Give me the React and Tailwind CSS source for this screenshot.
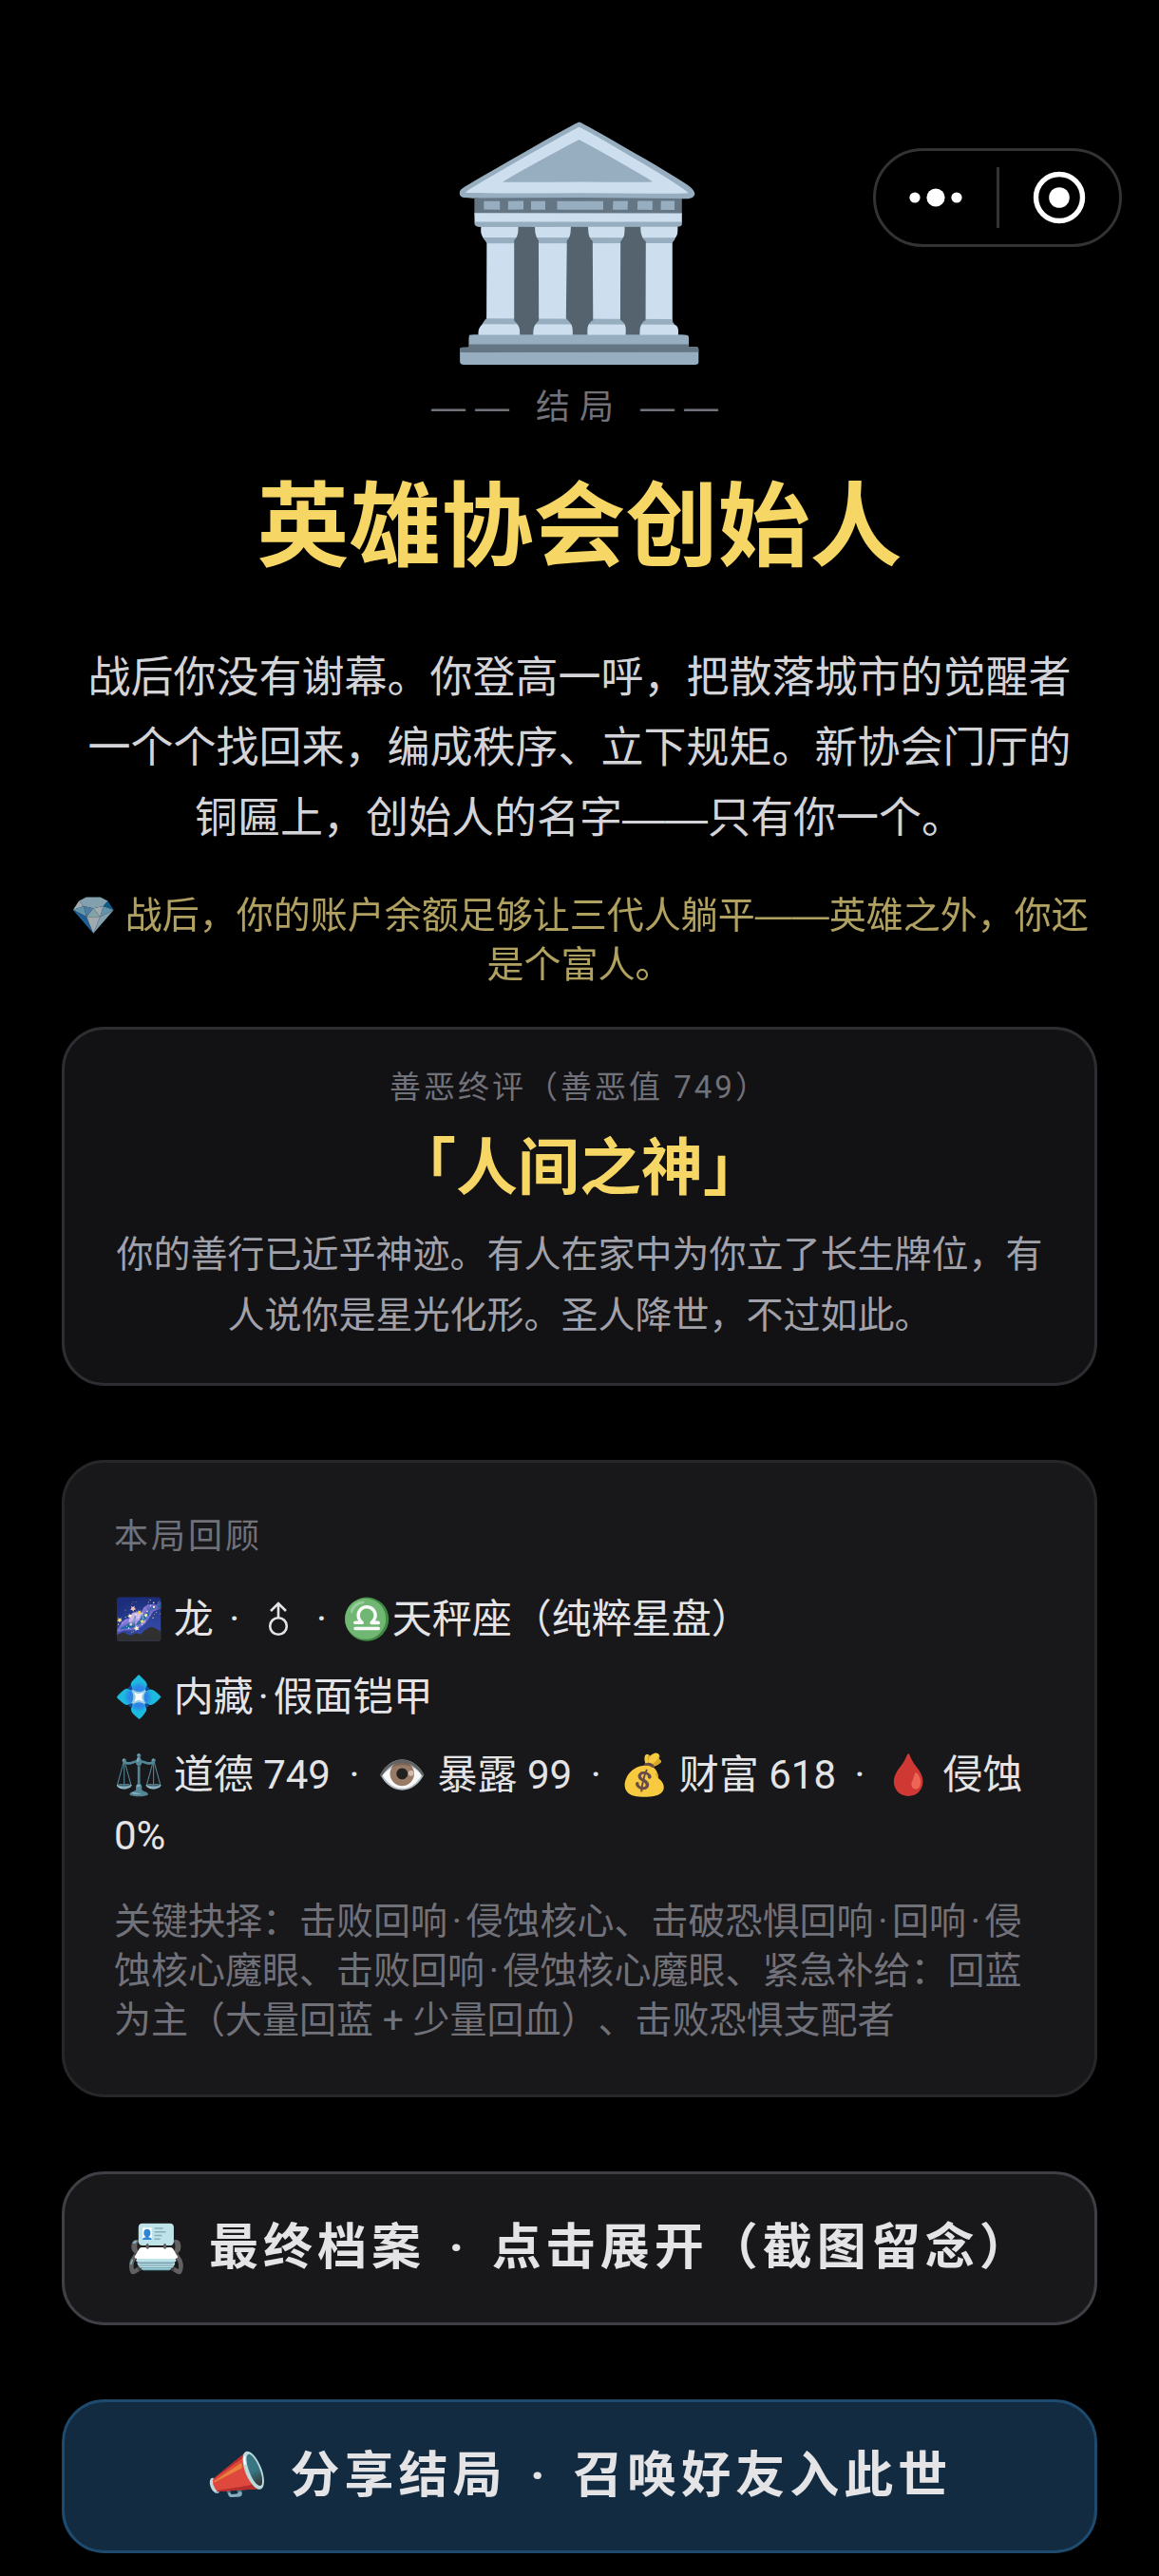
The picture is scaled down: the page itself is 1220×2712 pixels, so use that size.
import React from 'react';
import clsx from 'clsx';

const STATS = [
  { icon: '⚖️', label: '道德', value: '749' },
  { icon: '👁️', label: '暴露', value: '99' },
  { icon: '💰', label: '财富', value: '618' },
  { icon: '🩸', label: '侵蚀', value: '0%' },
];

const CHOICES = ['击败回响·侵蚀核心', '击破恐惧回响·回响·侵蚀核心魔眼', '击败回响·侵蚀核心魔眼', '紧急补给：回蓝为主（大量回蓝 + 少量回血）', '击败恐惧支配者'];

function Emoji({ children }) {
  return <span className="inline-block leading-none saturate-[0.85] font-['Noto_Color_Emoji']">{children}</span>;
}

function Dot({ className }) {
  return <span className={clsx('inline-block w-[0.5em] leading-none text-center', className)}>·</span>;
}

// Full-width double dash
function Dash() {
  return <span className="whitespace-nowrap leading-none font-['Liberation_Sans']">——</span>;
}

// Splits on the middle dot so that every dot gets the same half-width cell
function Dotted({ text }) {
  return text.split('·').map((part, i) => (
    <React.Fragment key={i}>
      {i > 0 && <Dot />}
      {part}
    </React.Fragment>
  ));
}

function MaleSign() {
  return (
    <svg viewBox="0 0 48 40" className="inline-block w-12 h-10 align-[-5px]" fill="none" stroke="currentColor" strokeWidth="2.6" role="img" aria-label="男">
      <circle cx="24" cy="28" r="8.8" />
      <path d="M24 19V4M16 12l8-8 8 8" />
    </svg>
  );
}

function Capsule() {
  return (
    <div className="absolute top-[156px] right-[39px] w-[262px] h-[104px] flex items-center rounded-full border-3 border-[#333333]">
      <button aria-label="更多" className="flex-1 h-full flex items-center justify-center">
        <svg viewBox="0 0 56 20" className="w-14 h-5" fill="#fff">
          <circle cx="6" cy="10" r="5.6" />
          <circle cx="28" cy="10" r="9.6" />
          <circle cx="50" cy="10" r="5.6" />
        </svg>
      </button>
      <span className="w-[3px] h-16 bg-[#333333]" />
      <button aria-label="关闭" className="flex-1 h-full flex items-center justify-center">
        <svg viewBox="0 0 56 56" className="w-14 h-14">
          <circle cx="28" cy="28" r="24.5" fill="none" stroke="#fff" strokeWidth="5.4" />
          <circle cx="28" cy="28" r="10.8" fill="#fff" />
        </svg>
      </button>
    </div>
  );
}

export default function App() {
  return (
    <div className="relative min-h-screen bg-black text-[#e4e4e7] [text-spacing-trim:space-all] font-['Roboto','Noto_Sans_CJK_SC',sans-serif]">
      <Capsule />

      <main className="px-[65px] pt-[128px] pb-[23px]">
        {/* Ending */}
        <header className="text-center font-['Noto_Sans_CJK_SC',sans-serif]">
          <div className="text-[233px] leading-[257px] font-['Noto_Color_Emoji']">🏛️</div>
          <p className="mt-4 text-[36px] leading-[48px] tracking-[10px] text-[#71717a]"><Dash /> 结局 <Dash /></p>
          <h1 className="mt-8 text-[97px] leading-[130px] font-bold text-[#f6d665]">英雄协会创始人</h1>
          <p className="mt-[62px] px-4 text-[45px] leading-[74px] text-[#d4d4d8]">
            战后你没有谢幕。你登高一呼，把散落城市的觉醒者一个个找回来，编成秩序、立下规矩。新协会门厅的铜匾上，创始人的名字<Dash />只有你一个。
          </p>
          <p className="mt-[39px] text-[39px] leading-[52px] text-[#fde68a] opacity-70">
            <Emoji>💎</Emoji> 战后，你的账户余额足够让三代人躺平<Dash />英雄之外，你还是个富人。
          </p>
        </header>

        {/* Karma verdict */}
        <section className="mt-[43px] px-[52px] py-[39px] rounded-[45px] border-3 border-[#2e2e32] bg-[#121214] text-center">
          <p className="text-[33px] leading-[44px] tracking-[3px] text-[#71717a]">善恶终评（善恶值 749）</p>
          <h2 className="mt-5 text-[65px] leading-[86px] font-bold text-[#f6d665]">「人间之神」</h2>
          <p className="mt-4 text-[39px] leading-[64px] text-[#a1a1aa]">
            你的善行已近乎神迹。有人在家中为你立了长生牌位，有人说你是星光化形。圣人降世，不过如此。
          </p>
        </section>

        {/* Run summary */}
        <section className="mt-[78px] px-[52px] pt-[54px] pb-[52px] rounded-[45px] border-3 border-[#27272a] bg-[#18181b]">
          <h3 className="text-[36px] leading-[48px] tracking-[3px] text-[#71717a]">本局回顾</h3>
          <div className="mt-[31px] flex flex-col gap-[18px] text-[42px] leading-[64px]">
            <p><Emoji>🌌</Emoji> 龙 <Dot className="mx-px" /> <MaleSign /> <Dot className="mx-px" /> <Emoji>♎</Emoji>天秤座（纯粹星盘）</p>
            <p><Emoji>💠</Emoji> <Dotted text="内藏·假面铠甲" /></p>
            <p>
              {STATS.map((s, i) => (
                <React.Fragment key={s.label}>
                  {i > 0 && <> <Dot className="mx-1" /> </>}
                  <Emoji>{s.icon}</Emoji> {s.label} {s.value}
                </React.Fragment>
              ))}
            </p>
          </div>
          <p className="mt-8 text-[39px] leading-[52px] text-[#71717a]">
            关键抉择：<Dotted text={CHOICES.join('、')} />
          </p>
        </section>

        <button className="mt-[78px] w-full h-[162px] rounded-[45px] border-3 border-[#3f3f46] bg-[#18181b] text-[52px] font-bold tracking-[5px]">
          <Emoji>📇</Emoji> 最终档案 <Dot className="mx-1" /> 点击展开（截图留念）
        </button>
        <button className="mt-[78px] w-full h-[162px] rounded-[45px] border-3 border-[#1e4a6e] bg-[#132b41] text-[52px] font-bold tracking-[5px]">
          <Emoji>📣</Emoji> 分享结局 <Dot className="mx-1" /> 召唤好友入此世
        </button>
      </main>
    </div>
  );
}
